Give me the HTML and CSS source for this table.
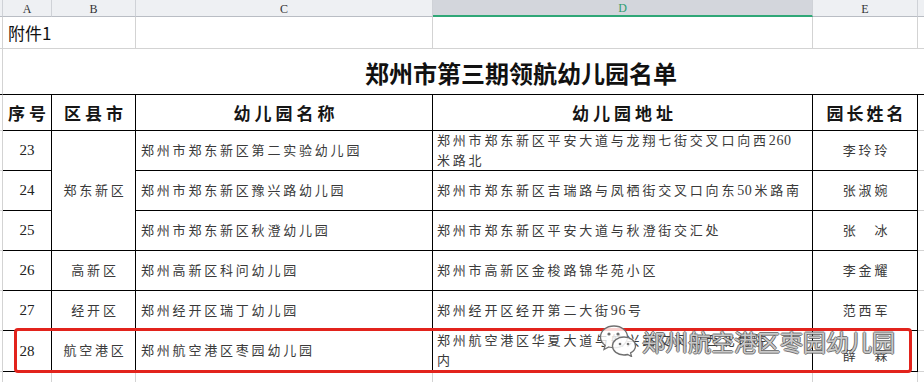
FILE: index.html
```html
<!DOCTYPE html>
<html lang="zh-CN">
<head>
<meta charset="utf-8">
<title>郑州市第三期领航幼儿园名单</title>
<link rel="stylesheet" href="styles.css">
</head>
<body>
<div class="sheet">
  <div class="colheads">
    <div class="ch ch-edge"></div>
    <div class="ch ch-a">A</div>
    <div class="ch ch-b">B</div>
    <div class="ch ch-c">C</div>
    <div class="ch ch-d sel">D</div>
    <div class="ch ch-e">E</div>
    <div class="ch ch-f"></div>
  </div>
  <div class="grid">
    <!-- row 1 -->
    <div class="c"></div>
    <div class="c note span2">附件1</div>
    <div class="c"></div>
    <div class="c"></div>
    <div class="c"></div>
    <div class="c nr"></div>
    <!-- row 2 -->
    <div class="c kb"></div>
    <div class="c title span5 kb nr">郑州市第三期领航幼儿园名单</div>
    <div class="c kb nr"></div>
    <!-- header row -->
    <div class="c"></div>
    <div class="c k hd">序号</div>
    <div class="c k hd">区县市</div>
    <div class="c k hd">幼儿园名称</div>
    <div class="c k hd">幼儿园地址</div>
    <div class="c k hd hd-e">园长姓名</div>
    <div class="c nr"></div>
    <!-- 23 -->
    <div class="c"></div>
    <div class="c k num">23</div>
    <div class="c k dist span3r">郑东新区</div>
    <div class="c k name">郑州市郑东新区第二实验幼儿园</div>
    <div class="c k addr"><div class="tx">郑州市郑东新区平安大道与龙翔七街交叉口向西<span class="dg">260</span><br>米路北</div></div>
    <div class="c k boss">李玲玲</div>
    <div class="c nr"></div>
    <!-- 24 -->
    <div class="c"></div>
    <div class="c k num">24</div>
    <div class="c k name">郑州市郑东新区豫兴路幼儿园</div>
    <div class="c k addr"><div class="tx">郑州市郑东新区吉瑞路与凤栖街交叉口向东<span class="dg">50</span>米路南</div></div>
    <div class="c k boss">张淑婉</div>
    <div class="c nr"></div>
    <!-- 25 -->
    <div class="c"></div>
    <div class="c k num">25</div>
    <div class="c k name">郑州市郑东新区秋澄幼儿园</div>
    <div class="c k addr"><div class="tx">郑州市郑东新区平安大道与秋澄街交汇处</div></div>
    <div class="c k boss">张　冰</div>
    <div class="c nr"></div>
    <!-- 26 -->
    <div class="c"></div>
    <div class="c k num">26</div>
    <div class="c k dist">高新区</div>
    <div class="c k name">郑州高新区科问幼儿园</div>
    <div class="c k addr"><div class="tx">郑州市高新区金梭路锦华苑小区</div></div>
    <div class="c k boss">李金耀</div>
    <div class="c nr"></div>
    <!-- 27 -->
    <div class="c"></div>
    <div class="c k num">27</div>
    <div class="c k dist">经开区</div>
    <div class="c k name">郑州经开区瑞丁幼儿园</div>
    <div class="c k addr"><div class="tx">郑州经开区经开第二大街<span class="dg">96</span>号</div></div>
    <div class="c k boss">范西军</div>
    <div class="c nr"></div>
    <!-- 28 -->
    <div class="c"></div>
    <div class="c k num">28</div>
    <div class="c k dist">航空港区</div>
    <div class="c k name">郑州航空港区枣园幼儿园</div>
    <div class="c k addr"><div class="tx">郑州航空港区华夏大道与航兴路交叉口西北角院<br>内</div></div>
    <div class="c k boss boss-low">薛　霖</div>
    <div class="c nr"></div>
    <!-- below -->
    <div class="c nbb"></div>
    <div class="c nbb"></div>
    <div class="c nbb"></div>
    <div class="c nbb"></div>
    <div class="c nbb"></div>
    <div class="c nbb"></div>
    <div class="c nbb nr"></div>
  </div>

  <div class="highlight"></div>
  <div class="watermark">
    <svg class="wx" width="38" height="33" viewBox="0 0 38 33">
      <path d="M15 2 C7 2 1.5 7 1.5 13 C1.5 16.5 3.3 19.4 6.2 21.3 L5 25.5 L9.8 23 C11.5 23.5 13.2 23.8 15 23.8 C22.8 23.8 28.5 19 28.5 13 C28.5 7 22.8 2 15 2 Z" fill="#fff" fill-opacity="0.8" stroke="#707070" stroke-width="1.3"/>
      <circle cx="10" cy="10" r="1.6" fill="#707070"/>
      <circle cx="19" cy="10" r="1.6" fill="#707070"/>
      <path d="M25 13 C18.5 13 13.5 17 13.5 22 C13.5 27 18.5 31 25 31 C26.3 31 27.5 30.8 28.6 30.5 L32.5 32.5 L31.6 28.9 C34.6 27.3 36.5 24.8 36.5 22 C36.5 17 31.5 13 25 13 Z" fill="#fff" fill-opacity="0.85" stroke="#707070" stroke-width="1.3"/>
      <circle cx="21" cy="20" r="1.3" fill="#707070"/>
      <circle cx="29" cy="20" r="1.3" fill="#707070"/>
    </svg>
    <span class="wm-text">郑州航空港区枣园幼儿园</span>
  </div>
</div>
</body>
</html>
```

FILE: styles.css
```css
* { box-sizing: border-box; }
html, body { margin: 0; padding: 0; background: #fff; }
body {
  width: 924px;
  height: 382px;
  overflow: hidden;
  font-family: "Liberation Serif", "Noto Sans CJK SC", serif;
  color: #222;
}
.sheet { position: relative; width: 924px; height: 382px; }

/* column header strip */
.colheads { display: flex; height: 17px; }
.ch {
  height: 17px;
  background: #eef0f3;
  border-right: 1px solid #cfd2d7;
  border-bottom: 1px solid #b9bdc4;
  font-family: "Liberation Serif", serif;
  font-size: 12px;
  color: #333;
  display: flex;
  align-items: center;
  justify-content: center;
  line-height: 1;
  padding-top: 1px;
}
.ch-edge { width: 3px; }
.ch-a { width: 49px; }
.ch-b { width: 84px; }
.ch-c { width: 297px; }
.ch-d { width: 380px; }
.ch-e { width: 105px; }
.ch-f { flex: 1; border-right: none; }
.ch.sel {
  background: #d3d6dc;
  color: #2f9d70;
  border-bottom: 2px solid #2fa777;
}

/* sheet grid */
.grid {
  display: grid;
  grid-template-columns: 3px 49px 84px 297px 380px 105px 6px;
  grid-template-rows: 32px 46px 36px 40px 40px 40px 40px 40px 41px 10px;
}
.c {
  border-right: 1px solid #d3d3d3;
  border-bottom: 1px solid #d3d3d3;
  display: flex;
  align-items: center;
  white-space: nowrap;
  min-width: 0;
  overflow: hidden;
}
.k { border-right-color: #000; border-bottom-color: #000; }
.kb { border-bottom-color: #000; }
.nr { border-right: none; }
.nbb { border-bottom: none; }
.span2 { grid-column: span 2; }
.span5 { grid-column: span 5; }
.span3r { grid-row: span 3; }

.note {
  font-family: "Noto Sans CJK SC", sans-serif;
  font-size: 17px;
  color: #111;
  padding-left: 5px;
}
.title {
  font-family: "Noto Sans CJK SC", sans-serif;
  font-weight: 700;
  font-size: 24px;
  color: #111;
  padding-left: 362px;
  padding-top: 1px;
}
.hd {
  font-family: "Noto Sans CJK SC", sans-serif;
  font-weight: 700;
  font-size: 17px;
  letter-spacing: 4px;
  padding-left: 4px;
  justify-content: center;
  color: #151515;
}
.hd-e { letter-spacing: 3px; padding-left: 3px; }

.num {
  font-family: "Liberation Serif", serif;
  font-size: 15px;
  color: #222;
  justify-content: center;
}
.dist, .name, .addr, .boss {
  font-family: "Liberation Serif", "Noto Sans CJK SC", serif;
  font-weight: 400;
  font-size: 13px;
  letter-spacing: 2.8px;
  color: #3a3a3a;
  line-height: 20px;
}
.tx { white-space: nowrap; }
.dg { letter-spacing: 0.6px; margin-right: 2px; font-size: 14px; }
.dist, .boss { justify-content: center; padding-left: 3px; }
.boss-low { padding-top: 10px; }
.name { padding-left: 5px; }
.addr { padding-left: 4px; }

/* overlays */
.highlight {
  position: absolute;
  left: 14px;
  top: 328px;
  width: 898px;
  height: 45px;
  border: 3px solid #e2231c;
  border-radius: 4px;
}
.watermark {
  position: absolute;
  left: 599px;
  top: 324px;
  display: flex;
  align-items: center;
  gap: 5px;
}
.wx { display: block; }
.wm-text {
  font-family: "Noto Sans CJK SC", sans-serif;
  font-size: 23px;
  line-height: 1;
  color: rgba(255, 255, 255, 0.7);
  margin-top: 1px;
  text-shadow:
    -1px 0 rgba(80, 80, 80, 0.75), 1px 0 rgba(80, 80, 80, 0.75),
    0 -1px rgba(80, 80, 80, 0.75), 0 1px rgba(80, 80, 80, 0.75);
}
```
